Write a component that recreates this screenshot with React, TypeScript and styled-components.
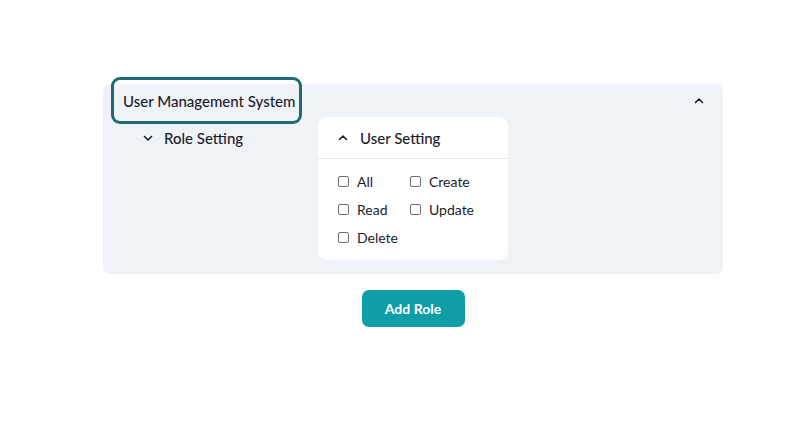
import React from "react";
import styled, { createGlobalStyle } from "styled-components";

const Global = createGlobalStyle`
  html, body { margin: 0; padding: 0; background: #ffffff; }
  body { font-family: Lato, "Noto Sans", sans-serif; color: #1b1d2a; }
  * { box-sizing: border-box; }
`;

const Page = styled.div`
  width: 801px;
  padding: 84px 0 0 25px;
  display: flex;
  flex-direction: column;
  align-items: center;
`;

const Panel = styled.section`
  width: 620px;
  background: #eff3f8;
  border-radius: 7px;
  padding: 0 0 14px 0;
`;

const Header = styled.div`
  height: 33px;
  display: flex;
  align-items: center;
  justify-content: space-between;
  padding: 0 19px 0 11px;
`;

const Title = styled.div`
  height: 41px;
  width: 185px;
  flex-shrink: 0;
  display: flex;
  align-items: center;
  padding-left: 9px;
  border-radius: 6px;
  box-shadow: 0 0 0 3px #1d6a72;
  font-size: 15px;
  font-weight: 500;
  white-space: nowrap;
`;

const Body = styled.div`
  display: flex;
  align-items: flex-start;
`;

const RoleRow = styled.div`
  width: 215px;
  height: 42px;
  display: flex;
  align-items: center;
  gap: 11px;
  padding-left: 40px;
  font-size: 15px;
  font-weight: 500;
`;

const Card = styled.div`
  width: 190px;
  height: 143px;
  background: #ffffff;
  border-radius: 9px;
`;

const CardHeader = styled.div`
  height: 42px;
  display: flex;
  align-items: center;
  gap: 12px;
  padding-left: 20px;
  border-bottom: 1px solid #e3e7ec;
  font-size: 15px;
  font-weight: 500;
`;

const Grid = styled.div`
  display: grid;
  grid-template-columns: 72px 80px;
  grid-auto-rows: 28px;
  padding: 8px 0 0 20px;
`;

const Check = styled.label`
  display: flex;
  align-items: center;
  gap: 8px;
  font-size: 14px;
  color: #1b1d2a;
`;

const Box = styled.span`
  width: 11px;
  height: 11px;
  border: 1px solid #6b6f78;
  border-radius: 2px;
  background: #fff;
`;

const AddButton = styled.button`
  margin-top: 16px;
  width: 103px;
  height: 37px;
  border: none;
  border-radius: 7px;
  background: #0f9ea7;
  color: #ffffff;
  font-family: Lato, sans-serif;
  font-size: 14px;
  font-weight: 700;
`;

const Chevron = ({ up }: { up?: boolean }) => (
  <svg width="10" height="7" viewBox="0 0 10 7" fill="none">
    <path
      d={up ? "M1.5 5.5 L5 2 L8.5 5.5" : "M1.5 1.5 L5 5 L8.5 1.5"}
      stroke="#1b1d2a"
      strokeWidth="1.6"
      strokeLinecap="round"
      strokeLinejoin="round"
    />
  </svg>
);

const perms = ["All", "Create", "Read", "Update", "Delete"];

export default function App() {
  return (
    <>
      <Global />
      <Page>
        <Panel>
          <Header>
            <Title>User Management System</Title>
            <Chevron up />
          </Header>
          <Body>
            <RoleRow>
              <Chevron />
              <span>Role Setting</span>
            </RoleRow>
            <Card>
              <CardHeader>
                <Chevron up />
                <span>User Setting</span>
              </CardHeader>
              <Grid>
                {perms.map((p) => (
                  <Check key={p}>
                    <Box />
                    {p}
                  </Check>
                ))}
              </Grid>
            </Card>
          </Body>
        </Panel>
        <AddButton>Add Role</AddButton>
      </Page>
    </>
  );
}
